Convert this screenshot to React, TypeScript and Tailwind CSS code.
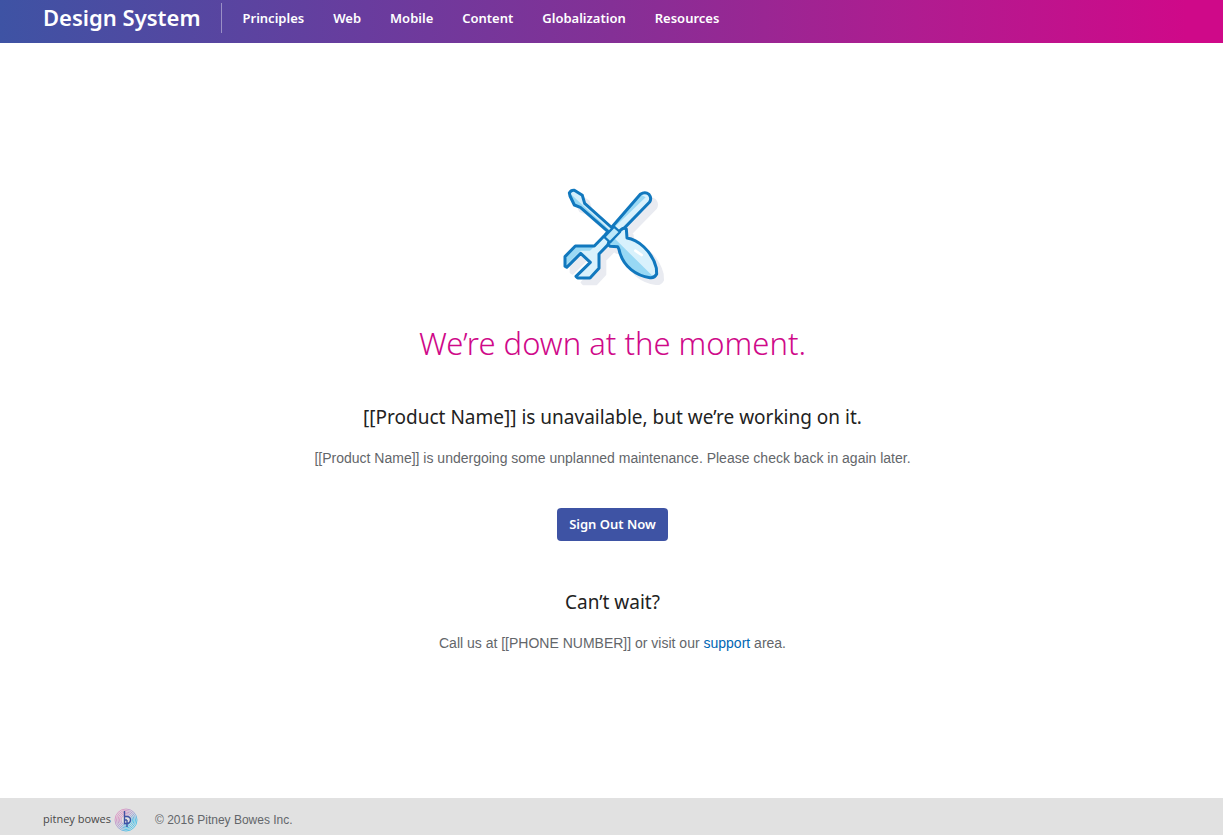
const navItems = ["Principles", "Web", "Mobile", "Content", "Globalization", "Resources"];

const wrench =
  "M271 43 Q285 33 297 43 Q306 54 299 66 L178 190 L147 222 V265 L120 294 H83 L78 289 L121 247 L92 220 L50 262 L45 259 V230 L76 198 H133 L165 165 Z";
const blade =
  "M58 39 Q63 30 73 31 L97 46 L104 70 L190 147 L177 157 L91 82 L73 75 L60 48 Z";
const handle =
  "M204 157 L216 147 Q222 142 229 147 L231 174 C262 178 306 212 319 264 L320 282 Q313 295 300 293 C262 288 218 262 207 208 L203 200 L181 199 Q171 194 177 186 Z";

function ToolsIcon() {
  return (
    <svg viewBox="0 0 375 345" className="h-[115px] w-[125px]" aria-hidden="true">
      <g transform="translate(18 18)" fill="#e9ebf1" stroke="#e9ebf1" strokeWidth="8" strokeLinejoin="round">
        <path d={wrench} />
        <path d={blade} />
        <path d={handle} />
      </g>
      <g strokeLinejoin="round" strokeLinecap="round">
        <path d={wrench} fill="#d9f1fc" />
        <path d="M271 43 L165 165 L133 198 H76 L45 230 V259 L92 212 H120 L287 52 Z" fill="#9bd9f4" />
        <path d={wrench} fill="none" stroke="#1178be" strokeWidth="9" />
        <path d={blade} fill="#d3eefb" />
        <path d="M60 40 L91 69 L182 153 L177 157 L91 82 L73 75 Z" fill="#96d7f3" />
        <path d={blade} fill="none" stroke="#1178be" strokeWidth="9" />
        <path d={handle} fill="#d8f1fc" />
        <path
          d="M190 172 L311 291 Q306 294 300 293 C262 288 218 262 207 208 L203 200 L181 199 Q171 194 177 186 Z"
          fill="#98d8f4"
        />
        <path d={handle} fill="none" stroke="#1178be" strokeWidth="9" />
        <path d="M192 140 L210 156 L180 187 L163 171 Z" fill="#bce7f9" stroke="#1178be" strokeWidth="7" />
        <path d="M256 212 L275 225" stroke="#ffffff" strokeWidth="8" />
      </g>
    </svg>
  );
}

function BrandMark() {
  return (
    <svg viewBox="0 0 24 24" className="size-6" fill="none" aria-hidden="true">
      <defs>
        <linearGradient id="rings" x1="0" y1="0" x2="1" y2="1">
          <stop offset="0.2" stopColor="#d98abf" />
          <stop offset="0.5" stopColor="#9a93d0" />
          <stop offset="0.75" stopColor="#35bce9" />
        </linearGradient>
      </defs>
      <g stroke="url(#rings)" strokeWidth="0.8">
        <circle cx="12" cy="12" r="11" />
        <circle cx="12" cy="12" r="9.5" />
        <circle cx="12" cy="12" r="8" />
        <circle cx="12" cy="12" r="6.5" />
        <circle cx="12" cy="12" r="5" />
      </g>
      <path
        d="M10.5 3 V15.5 H13 A3.5 3.5 0 0 0 13 8.5 H10.5 M13 12 V19 M10.5 12 H13"
        stroke="#3e53a4"
        strokeWidth="1.4"
      />
    </svg>
  );
}

export default function App() {
  return (
    <div className="flex min-h-screen flex-col bg-white font-['Liberation_Sans',sans-serif] text-sm text-[#63666a]">
      <header className="flex h-[43px] items-start bg-[linear-gradient(to_right,#3e53a4_0%,#693c9e_30%,#843096_50%,#b01c90_75%,#cf0989_97%)] pl-[43px] font-['Noto_Sans',sans-serif] text-white">
        <a href="#" className="pr-5 text-[22px] leading-[34px] font-semibold">
          Design System
        </a>
        <nav className="mt-[3px] flex h-[30px] items-center gap-[29px] border-l border-white/40 pl-[21px] text-[13px] font-semibold">
          {navItems.map((item) => (
            <a key={item} href="#" className="hover:underline">
              {item}
            </a>
          ))}
        </nav>
      </header>

      <main className="flex flex-1 flex-col items-center pt-[137px] pr-4 pl-[18px] text-center">
        <ToolsIcon />
        <h1 className="mt-6 font-['Noto_Sans',sans-serif] text-[31px] leading-[48px] font-light text-[#cf0989]">
          We’re down at the moment.
        </h1>
        <h2 className="mt-9 font-['Noto_Sans',sans-serif] text-[19px] leading-7 text-[#222222]">
          [[Product Name]] is unavailable, but we’re working on it.
        </h2>
        <p className="mt-[15px] leading-6">
          [[Product Name]] is undergoing some unplanned maintenance. Please check back in again later.
        </p>
        <button
          type="button"
          className="mt-[38px] h-[33px] rounded bg-[#3e53a4] px-3 font-['Noto_Sans',sans-serif] text-[13px] font-semibold text-white"
        >
          Sign Out Now
        </button>
        <h2 className="mt-[47px] font-['Noto_Sans',sans-serif] text-[19px] leading-7 text-[#222222]">Can’t wait?</h2>
        <p className="mt-[15px] leading-6">
          Call us at [[PHONE NUMBER]] or visit our{" "}
          <a href="#" className="text-[#0066b3] hover:underline">
            support
          </a>{" "}
          area.
        </p>
      </main>

      <footer className="flex h-[37px] items-center bg-[#e1e1e1] pt-1.5 pl-[43px] text-xs">
        <a href="#" className="flex items-center gap-[3px] font-['Open_Sans',sans-serif] text-[11px] text-[#484848]">
          pitney bowes
          <BrandMark />
        </a>
        <p className="ml-[17px]">© 2016 Pitney Bowes Inc.</p>
      </footer>
    </div>
  );
}
